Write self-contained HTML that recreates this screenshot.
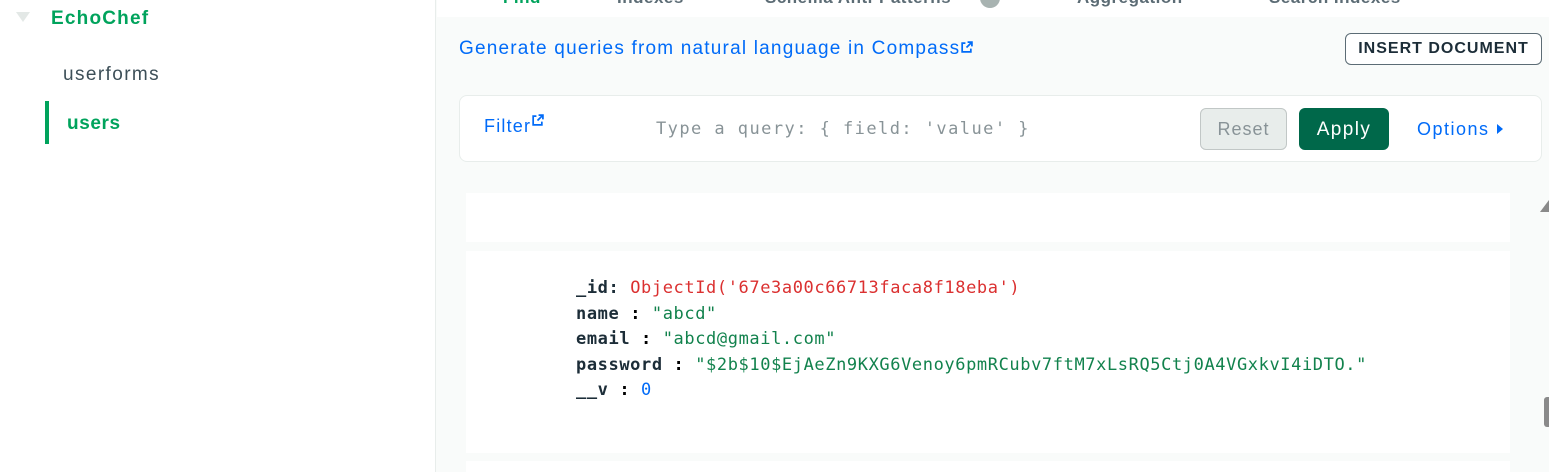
<!DOCTYPE html>
<html><head><meta charset="utf-8"><style>
*{margin:0;padding:0;box-sizing:border-box}
html,body{width:1549px;height:472px;overflow:hidden}
body{background:#f9fbfa;font-family:"Liberation Sans",sans-serif;position:relative;letter-spacing:1.2px}
.side{position:absolute;left:0;top:0;width:436px;height:472px;background:#fff;border-right:1px solid #e8edeb}
.abs{position:absolute;white-space:nowrap}
.tabs{position:absolute;left:437px;top:0;width:1112px;height:17px;background:#fff;overflow:hidden}
.tabs span{position:absolute;top:-12px;font-size:17px;color:#5c6c75;font-weight:bold;letter-spacing:0.5px}
.mono{font-family:"DejaVu Sans Mono","Liberation Mono",monospace;font-size:17px;letter-spacing:0.6px}
.card{position:absolute;left:466px;width:1044px;background:#fff}
</style></head><body>
<div class="side">
  <svg class="abs" style="left:15px;top:11px" width="16" height="12"><polygon points="1,1 15,1 8,11" fill="#e3e8e6"/></svg>
  <div class="abs" style="left:51px;top:8px;font-size:19px;font-weight:bold;color:#00a35c">EchoChef</div>
  <div class="abs" style="left:63px;top:64px;font-size:19px;color:#3d4f58;letter-spacing:1.4px">userforms</div>
  <div style="position:absolute;left:45px;top:101px;width:4px;height:43px;background:#00a35c"></div>
  <div class="abs" style="left:67px;top:113px;font-size:19px;font-weight:bold;color:#00a35c;letter-spacing:0.6px">users</div>
</div>
<div class="tabs">
  <span style="left:66px;color:#00a35c">Find</span>
  <span style="left:180px">Indexes</span>
  <span style="left:328px">Schema Anti-Patterns</span>
  <div style="position:absolute;left:543px;top:-12px;width:20px;height:20px;border-radius:10px;background:#a8b3b1"></div>
  <span style="left:640px">Aggregation</span>
  <span style="left:832px">Search Indexes</span>
</div>
<div class="abs" style="left:459px;top:38px;font-size:19px;color:#016bf8">Generate queries from natural language in Compass<svg width="13" height="13" viewBox="0 0 12 12" style="vertical-align:top;margin-top:3px"><path d="M5 2H2v8h8V7M7 1h4v4M11 1L6 6" fill="none" stroke="#016bf8" stroke-width="1.6"/></svg></div>
<div class="abs" style="left:1345px;top:33px;width:197px;height:32px;border:1px solid #5c6c75;border-radius:6px;background:#fff;font-size:16px;font-weight:bold;color:#1c2d38;text-align:center;line-height:30px;letter-spacing:1px">INSERT DOCUMENT</div>
<div style="position:absolute;left:459px;top:95px;width:1083px;height:67px;background:#fff;border:1px solid #e8edeb;border-radius:8px"></div>
<div class="abs" style="left:484px;top:116px;font-size:18px;color:#016bf8">Filter<svg width="13" height="13" viewBox="0 0 12 12" style="vertical-align:top;margin-top:-2px"><path d="M5 2H2v8h8V7M7 1h4v4M11 1L6 6" fill="none" stroke="#016bf8" stroke-width="1.6"/></svg></div>
<div class="abs mono" style="left:656px;top:119px;color:#889397;letter-spacing:1.45px">Type a query: { field: 'value' }</div>
<div class="abs" style="left:1200px;top:108px;width:87px;height:42px;background:#e8edeb;border:1px solid #c1c7c6;border-radius:6px;font-size:18px;color:#889397;text-align:center;line-height:41px;letter-spacing:1px">Reset</div>
<div class="abs" style="left:1299px;top:108px;width:90px;height:42px;background:#00684a;border-radius:6px;font-size:19px;color:#fff;text-align:center;line-height:43px;letter-spacing:1.4px">Apply</div>
<div class="abs" style="left:1417px;top:119px;font-size:18px;color:#016bf8;letter-spacing:1.5px">Options <svg width="8" height="12"><polygon points="1,1 7,6 1,11" fill="#016bf8"/></svg></div>
<div class="card" style="top:193px;height:49px"></div>
<div class="card" style="top:251px;height:202px"></div>
<div class="card" style="top:461px;height:20px"></div>
<div class="abs mono" style="left:576px;top:276px;line-height:25.5px">
<div><b style="color:#1c2d38">_id:</b> <span style="color:#db3030">ObjectId('67e3a00c66713faca8f18eba')</span></div>
<div><b style="color:#1c2d38">name</b> <b>:</b> <span style="color:#12824d">"abcd"</span></div>
<div><b style="color:#1c2d38">email</b> <b>:</b> <span style="color:#12824d">"abcd@gmail.com"</span></div>
<div><b style="color:#1c2d38">password</b> <b>:</b> <span style="color:#12824d">"$2b$10$EjAeZn9KXG6Venoy6pmRCubv7ftM7xLsRQ5Ctj0A4VGxkvI4iDTO."</span></div>
<div><b style="color:#1c2d38">__v</b> <b>:</b> <span style="color:#016bf8">0</span></div>
</div>
<div style="position:absolute;left:1540px;top:200px;width:9px;height:12px;background:#8a8a8a;clip-path:polygon(100% 0,100% 100%,0 100%)"></div>
<div style="position:absolute;left:1544px;top:397px;width:5px;height:30px;background:#8a8a8a;border-radius:3px 0 0 3px"></div>
</body></html>
